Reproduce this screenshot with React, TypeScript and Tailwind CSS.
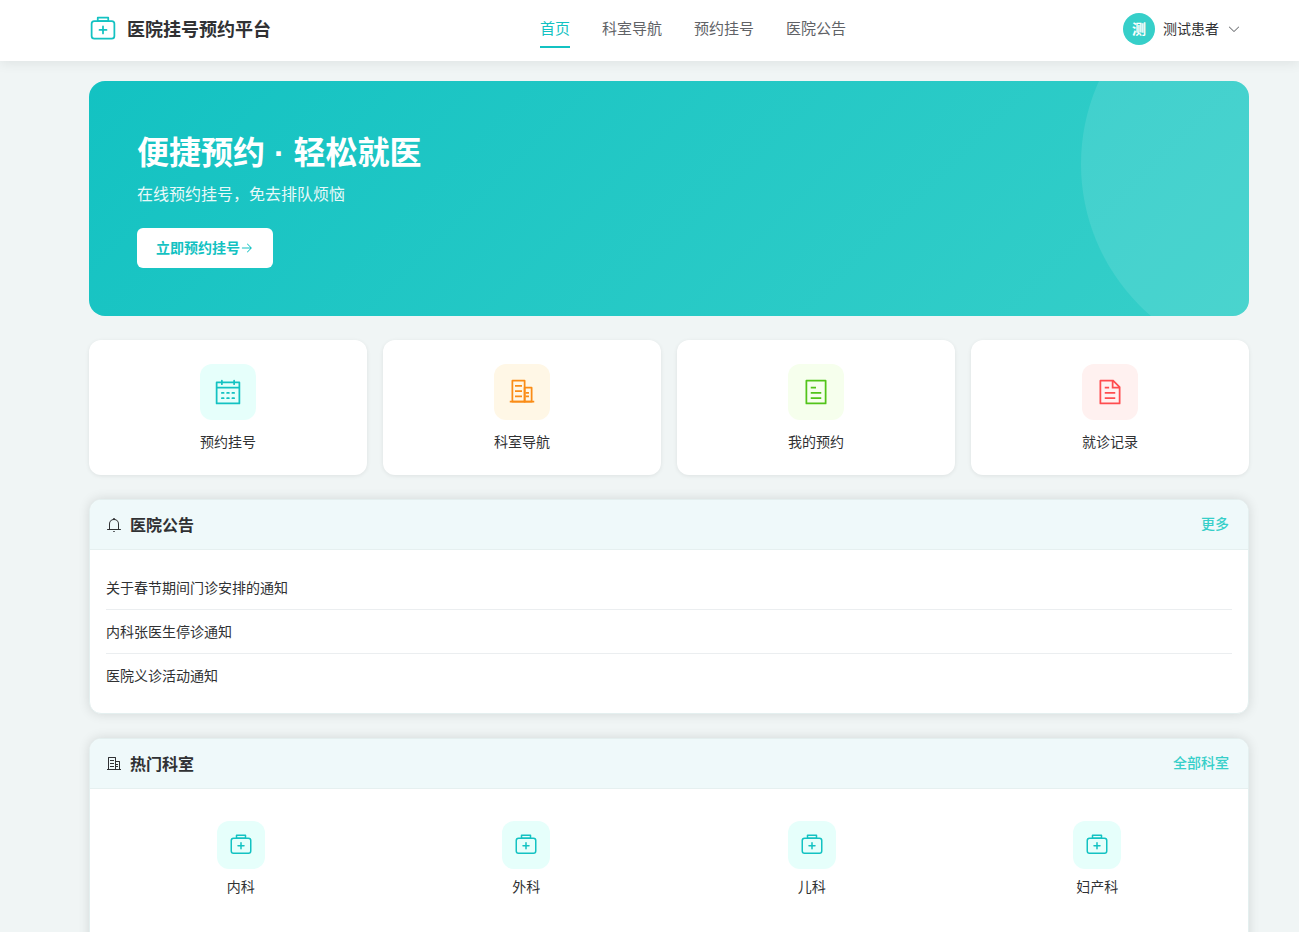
import { ReactNode } from 'react'

const paths = {
  kit: 'M192 256a64 64 0 0 0-64 64v448a64 64 0 0 0 64 64h640a64 64 0 0 0 64-64V320a64 64 0 0 0-64-64H192zm0-64h640a128 128 0 0 1 128 128v448a128 128 0 0 1-128 128H192A128 128 0 0 1 64 768V320a128 128 0 0 1 128-128zM544 512h96a32 32 0 0 1 0 64h-96v96a32 32 0 0 1-64 0v-96h-96a32 32 0 0 1 0-64h96v-96a32 32 0 0 1 64 0v96zM352 128v64h320v-64H352zm-32-64h384a32 32 0 0 1 32 32v128a32 32 0 0 1-32 32H320a32 32 0 0 1-32-32V96a32 32 0 0 1 32-32z',
  calendar:
    'M128 384v512h768V192H768v32a32 32 0 1 1-64 0v-32H320v32a32 32 0 0 1-64 0v-32H128v128h768v64H128zm192-256h384V96a32 32 0 1 1 64 0v32h160a32 32 0 0 1 32 32v768a32 32 0 0 1-32 32H96a32 32 0 0 1-32-32V160a32 32 0 0 1 32-32h160V96a32 32 0 0 1 64 0v32zm-32 384h64a32 32 0 0 1 0 64h-64a32 32 0 0 1 0-64zm0 192h64a32 32 0 1 1 0 64h-64a32 32 0 1 1 0-64zm192-192h64a32 32 0 0 1 0 64h-64a32 32 0 0 1 0-64zm0 192h64a32 32 0 1 1 0 64h-64a32 32 0 1 1 0-64zm192-192h64a32 32 0 1 1 0 64h-64a32 32 0 1 1 0-64zm0 192h64a32 32 0 1 1 0 64h-64a32 32 0 1 1 0-64z',
  building:
    'M192 128v704h384V128H192zm-32-64h448a32 32 0 0 1 32 32v768a32 32 0 0 1-32 32H160a32 32 0 0 1-32-32V96a32 32 0 0 1 32-32zM256 256h256v64H256v-64zm0 192h256v64H256v-64zm0 192h256v64H256v-64zm384-128h128v64H640v-64zm0 128h128v64H640v-64zM64 832h896v64H64v-64zM640 384v448h192V384H640zm-32-64h256a32 32 0 0 1 32 32v512a32 32 0 0 1-32 32H608a32 32 0 0 1-32-32V352a32 32 0 0 1 32-32z',
  tickets:
    'M192 128v768h640V128H192zm-32-64h704a32 32 0 0 1 32 32v832a32 32 0 0 1-32 32H160a32 32 0 0 1-32-32V96a32 32 0 0 1 32-32zm160 448h384v64H320v-64zm0-192h192v64H320v-64zm0 384h384v64H320v-64z',
  document:
    'M832 384H576V128H192v768h640V384zm-26.496-64L640 154.496V320h165.504zM160 64h480l256 256v608a32 32 0 0 1-32 32H160a32 32 0 0 1-32-32V96a32 32 0 0 1 32-32zm160 448h384v64H320v-64zm0-192h160v64H320v-64zm0 384h384v64H320v-64z',
  bell: 'M512 64a64 64 0 0 1 64 64v64H448v-64a64 64 0 0 1 64-64zM256 768h512V448a256 256 0 1 0-512 0v320zm256-640a320 320 0 0 1 320 320v384H192V448a320 320 0 0 1 320-320zM96 768h832q32 0 32 32t-32 32H96q-32 0-32-32t32-32zm352 128h128a64 64 0 0 1-128 0z',
  arrowDown:
    'M831.872 340.864 512 652.672 192.128 340.864a30.592 30.592 0 0 0-42.752 0 29.12 29.12 0 0 0 0 41.6L489.664 714.24a32 32 0 0 0 44.672 0l340.288-331.712a29.12 29.12 0 0 0 0-41.728 30.592 30.592 0 0 0-42.752 0z',
  arrowRight:
    'M754.752 480H160a32 32 0 1 0 0 64h594.752L521.344 777.344a32 32 0 0 0 45.312 45.312l288-288a32 32 0 0 0 0-45.312l-288-288a32 32 0 1 0-45.312 45.312L754.752 480z'
}

type IconName = keyof typeof paths

// The document sheet is one outline with its holes, the other icons are stacked shapes
const Icon = ({ name, className }: { name: IconName; className: string }) => {
  const shapes = name === 'document' ? [paths[name]] : paths[name].split(/(?<=z)(?=M)/)
  return (
    <svg viewBox="0 0 1024 1024" fill="currentColor" aria-hidden="true" className={`shrink-0 ${className}`}>
      {shapes.map((d) => (
        <path key={d} d={d} fillRule="evenodd" />
      ))}
    </svg>
  )
}

const navItems = ['首页', '科室导航', '预约挂号', '医院公告']

const shortcuts: { icon: IconName; label: string; color: string }[] = [
  { icon: 'calendar', label: '预约挂号', color: 'bg-[#e6fffb] text-[#13c2c2]' },
  { icon: 'building', label: '科室导航', color: 'bg-[#fff7e6] text-[#fa8c16]' },
  { icon: 'tickets', label: '我的预约', color: 'bg-[#f6ffed] text-[#52c41a]' },
  { icon: 'document', label: '就诊记录', color: 'bg-[#fff1f0] text-[#ff4d4f]' }
]

const notices = ['关于春节期间门诊安排的通知', '内科张医生停诊通知', '医院义诊活动通知']

const departments = ['内科', '外科', '儿科', '妇产科']

const Header = () => (
  <header className="relative flex h-[61px] items-center justify-between bg-white pr-[50px] pb-[3px] pl-[89px] shadow-[0_2px_12px_rgba(0,0,0,0.08)]">
    <a href="#" className="flex items-center gap-2.5">
      <Icon name="kit" className="size-7 text-[#13c2c2]" />
      <span className="pt-0.5 text-lg font-bold">医院挂号预约平台</span>
    </a>
    <nav className="flex gap-8 text-[15px]">
      {navItems.map((item, i) => (
        <a
          key={item}
          href="#"
          aria-current={i === 0 ? 'page' : undefined}
          className={
            i === 0
              ? 'border-b-2 border-[#13c2c2] pt-[7px] pb-[5px] leading-6 text-[#13c2c2]'
              : 'border-b-2 border-transparent pt-[7px] pb-[5px] leading-6 text-[#606266]'
          }
        >
          {item}
        </a>
      ))}
    </nav>
    <button type="button" className="flex items-center gap-2 px-2">
      <span className="flex size-8 items-center justify-center rounded-full bg-[#36cfc9] text-sm font-bold text-white">
        测
      </span>
      <span className="text-sm">测试患者</span>
      <Icon name="arrowDown" className="size-3.5 text-[#606266]" />
    </button>
  </header>
)

const Hero = () => (
  <section className="relative overflow-hidden rounded-2xl bg-[linear-gradient(135deg,#13c2c2_0%,#36cfc9_100%)] p-12 text-white">
    <div className="absolute top-[-50%] right-[-20%] size-[400px] rounded-full bg-white/10" />
    <h1 className="mb-1.5 text-[32px] leading-[48px] font-bold">便捷预约 · 轻松就医</h1>
    <p className="mb-[22px] text-base leading-[23px] opacity-90">在线预约挂号，免去排队烦恼</p>
    <button
      type="button"
      className="flex h-10 items-center rounded-md bg-white px-[19px] text-sm font-bold text-[#13c2c2]"
    >
      立即预约挂号
      <Icon name="arrowRight" className="size-3.5" />
    </button>
  </section>
)

const Panel = ({
  icon,
  title,
  more,
  children
}: {
  icon: IconName
  title: string
  more: string
  children: ReactNode
}) => (
  <section className="overflow-hidden rounded-xl border border-[#e4efef] bg-white shadow-[0_0_12px_rgba(0,0,0,0.12)]">
    <div className="flex h-[50px] items-center justify-between border-b border-[#e6f0f0] bg-[#eff9fa] pr-[19px] pl-4">
      <h2 className="flex items-center gap-2 text-base font-bold">
        <Icon name={icon} className="size-4" />
        <span className="pt-0.5">{title}</span>
      </h2>
      <a href="#" className="pb-0.5 text-sm font-medium text-[#36cfc9]">
        {more}
      </a>
    </div>
    {children}
  </section>
)

export default function App() {
  return (
    <div className="min-h-screen bg-[#f0f5f5] font-['Liberation_Sans','Noto_Sans_CJK_SC',sans-serif] text-[#303133]">
      <Header />
      <main className="flex flex-col gap-6 pt-5 pr-[50px] pl-[89px]">
        <Hero />
        <div className="grid grid-cols-4 gap-4">
          {shortcuts.map(({ icon, label, color }) => (
            <a
              key={label}
              href="#"
              className="flex flex-col items-center gap-3 rounded-xl bg-white pt-6 pb-[22px] shadow-[0_1px_4px_rgba(0,0,0,0.08)]"
            >
              <span className={`flex size-14 items-center justify-center rounded-xl ${color}`}>
                <Icon name={icon} className="size-7" />
              </span>
              <span className="text-sm leading-[21px]">{label}</span>
            </a>
          ))}
        </div>
        <Panel icon="bell" title="医院公告" more="更多">
          <ul className="p-4">
            {notices.map((notice) => (
              <li
                key={notice}
                className="border-b border-[#ebeef0] pt-3 pb-2.5 text-sm leading-[21px] last:border-b-0"
              >
                <a href="#">{notice}</a>
              </li>
            ))}
          </ul>
        </Panel>
        <Panel icon="building" title="热门科室" more="全部科室">
          <div className="grid grid-cols-4 gap-4 px-4 pt-4 pb-10">
            {departments.map((department) => (
              <a key={department} href="#" className="flex flex-col items-center gap-2 py-4">
                <span className="flex size-12 items-center justify-center rounded-xl bg-[#e6fffb] text-[#13c2c2]">
                  <Icon name="kit" className="size-6" />
                </span>
                <span className="text-sm leading-[21px]">{department}</span>
              </a>
            ))}
          </div>
        </Panel>
      </main>
    </div>
  )
}
